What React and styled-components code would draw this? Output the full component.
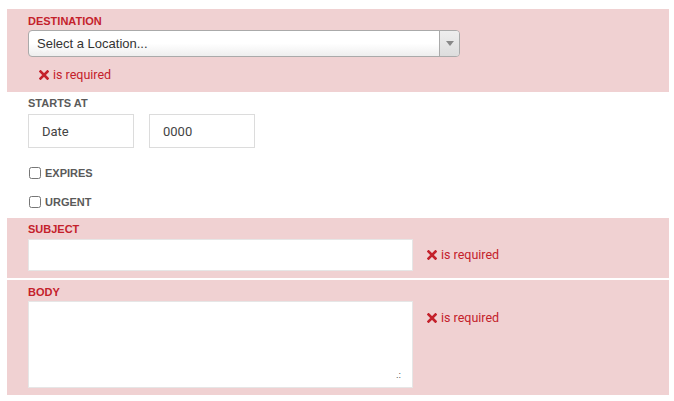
import React from "react";
import styled, { createGlobalStyle } from "styled-components";

const GlobalStyle = createGlobalStyle`
    body {
        margin: 0;
        background: #ffffff;
        font-family: "Liberation Sans", Arial, sans-serif;
    }
`;

const theme = {
    pink: "#f0d1d2",
    red: "#c4212b",
    gray: "#5a5a5a",
    border: "#dcdcdc",
};

const Page = styled.div`
    padding: 9px 5px 0 7px;
`;

const Section = styled.div`
    background-color: ${props => props.error ? theme.pink : "transparent"};
    padding: ${props => props.padding || "4px 0 7px 21px"};
    margin-top: ${props => props.marginTop || "0px"};
`;

const Label = styled.div`
    font-size: 11px;
    line-height: 14px;
    font-weight: bold;
    text-transform: uppercase;
    color: ${props => props.error ? theme.red : theme.gray};
    margin-bottom: ${props => props.gap || "3px"};
`;

const Row = styled.div`
    display: flex;
    align-items: flex-start;
    gap: ${props => props.gap || "14px"};
`;

const SelectBox = styled.div`
    width: 432px;
    height: 27px;
    box-sizing: border-box;
    border: 1px solid #aaaaaa;
    border-radius: 4px;
    background: linear-gradient(#ffffff 50%, #eeeeee);
    display: flex;
    align-items: center;
    font-size: 13px;
    color: #333;
    overflow: hidden;
`;

const SelectText = styled.span`
    flex: 1;
    padding-left: 8px;
`;

const SelectArrow = styled.div`
    width: 19px;
    height: 100%;
    border-left: 1px solid #aaaaaa;
    background: linear-gradient(#eeeeee, #dddddd);
    display: grid;
    place-items: center;

    &::after {
        content: "";
        border-left: 4px solid transparent;
        border-right: 4px solid transparent;
        border-top: 5px solid #888;
    }
`;

const ErrorText = styled.div`
    display: flex;
    align-items: center;
    gap: 4px;
    color: ${theme.red};
    font-family: Roboto, "Liberation Sans", sans-serif;
    font-size: 12.5px;
    line-height: 16px;
    padding-left: ${props => props.indent || "0px"};
    margin-top: ${props => props.marginTop || "8px"};
`;

const TextInput = styled.input`
    width: ${props => props.width};
    height: ${props => props.height};
    box-sizing: border-box;
    border: 1px solid ${props => props.error ? "#e6e6e6" : theme.border};
    background: #ffffff;
    padding: 0 0 0 13px;
    margin: 0;
    font-family: Roboto, "Liberation Sans", sans-serif;
    font-size: 13px;
    color: #444;
    outline: none;

    &::placeholder {
        color: #444;
        opacity: 1;
    }
`;

const TextAreaWrap = styled.div`
    position: relative;
    width: 385px;
    height: 87px;

    &::after {
        content: ".:";
        position: absolute;
        right: 12px;
        bottom: 8px;
        font-size: 9px;
        line-height: 9px;
        color: #555;
        pointer-events: none;
    }
`;

const TextArea = styled.textarea`
    width: 100%;
    height: 100%;
    box-sizing: border-box;
    border: 1px solid #e6e6e6;
    background: #ffffff;
    margin: 0;
    display: block;
    outline: none;
    resize: none;
`;

const CheckRow = styled.label`
    display: flex;
    align-items: center;
    gap: 4px;
    font-size: 11px;
    line-height: 14px;
    font-weight: bold;
    text-transform: uppercase;
    color: ${theme.gray};
    margin-top: ${props => props.marginTop};
    padding-left: 1px;

    input {
        margin: 0;
        width: 12px;
        height: 12px;
    }
`;

const Cross = () => (
    <svg width="10" height="10" viewBox="0 0 10 10">
        <path d="M1.5 1.5 L8.5 8.5 M8.5 1.5 L1.5 8.5" stroke={theme.red} strokeWidth="2.6" strokeLinecap="square" />
    </svg>
);

const Required = ({ indent, marginTop }) => (
    <ErrorText indent={indent} marginTop={marginTop}>
        <Cross />
        <span>is required</span>
    </ErrorText>
);

export default function App() {
    return (
        <Page>
            <GlobalStyle />
            <Section error padding="5px 0 9px 21px">
                <Label error gap="2px">Destination</Label>
                <SelectBox>
                    <SelectText>Select a Location...</SelectText>
                    <SelectArrow />
                </SelectBox>
                <Required indent="11px" marginTop="10px" />
            </Section>

            <Section padding="4px 0 9px 21px">
                <Label gap="4px">Starts at</Label>
                <Row gap="15px">
                    <TextInput width="106px" height="34px" placeholder="Date" />
                    <TextInput width="106px" height="34px" placeholder="0000" />
                </Row>
                <CheckRow marginTop="18px"><input type="checkbox" />Expires</CheckRow>
                <CheckRow marginTop="15px"><input type="checkbox" />Urgent</CheckRow>
            </Section>

            <Section error padding="4px 0 7px 21px">
                <Label error gap="3px">Subject</Label>
                <Row>
                    <TextInput error width="385px" height="32px" />
                    <Required />
                </Row>
            </Section>

            <Section error padding="5px 0 7px 21px" marginTop="2px">
                <Label error gap="2px">Body</Label>
                <Row gap="14px">
                    <TextAreaWrap>
                        <TextArea />
                    </TextAreaWrap>
                    <Required marginTop="9px" />
                </Row>
            </Section>
        </Page>
    );
}
